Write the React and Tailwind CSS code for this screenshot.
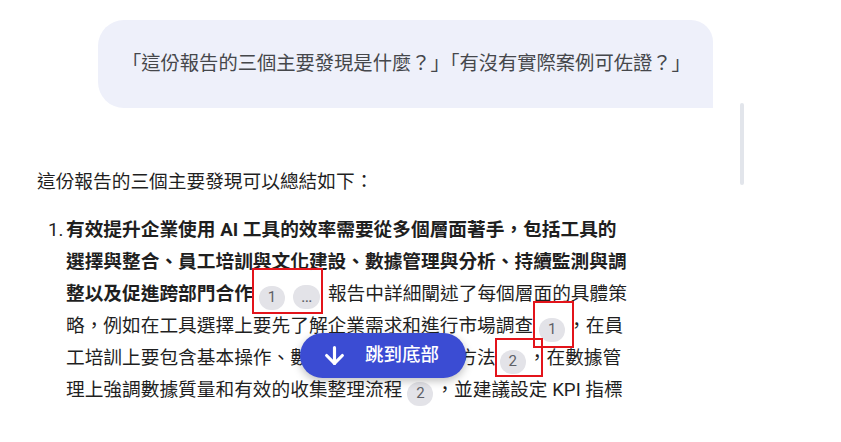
import { ArrowDown } from "lucide-react";

// Chat answer with source chips and a jump-to-bottom pill.

function Chip({ children, className = "" }) {
  return (
    <span
      className={`inline-block h-[24px] min-w-[26px] rounded-full bg-[#e3e3e8] px-[8px] text-center align-[-2px] text-[15px] leading-[23px] text-[#5e6066] ${className}`}
      style={{ fontFamily: "Roboto, sans-serif" }}
    >
      {children}
    </span>
  );
}

export default function App() {
  return (
    <div
      className="relative h-[442px] w-[841px] overflow-hidden bg-white text-[#1f1f1f]"
      style={{ fontFamily: 'Roboto, "Noto Sans CJK TC", sans-serif' }}
    >
      <div className="ml-[98px] mt-[20px] flex h-[88px] w-[615px] items-center rounded-l-[26px] rounded-tr-[22px] bg-[#eef0fa] pl-[24px] text-[19.3px] text-[#45474b]">
        「這份報告的三個主要發現是什麼？」「有沒有實際案例可佐證？」
      </div>

      <div className="absolute left-[740px] top-[103px] h-[82px] w-[4px] rounded-full bg-[#e2e5eb]" />

      <p className="ml-[37px] mt-[58px] text-[18.7px] leading-[32px]">這份報告的三個主要發現可以總結如下：</p>

      <div className="mt-[16px] flex text-[18.7px] leading-[32px]">
        <span className="ml-[48px] w-[18px] shrink-0">1.</span>
        <div className="whitespace-nowrap">
          <span className="font-bold">有效提升企業使用 AI 工具的效率需要從多個層面著手，包括工具的</span>
          <br />
          <span className="font-bold">選擇與整合、員工培訓與文化建設、數據管理與分析、持續監測與調</span>
          <br />
          <span className="font-bold">整以及促進跨部門合作</span>
          <Chip className="ml-[6px]">1</Chip>
          <Chip className="ml-[8px] text-[17px]">…</Chip>
          <span className="ml-[3px]"> 報告中詳細闡述了每個層面的具體策</span>
          <br />
          略，例如在工具選擇上要先了解企業需求和進行市場調查
          <Chip className="ml-[6px] mr-[2px]">1</Chip>，在員
          <br />
          工培訓上要包含基本操作、數據分析與實務應用方法
          <Chip className="ml-[4px] mr-[2px]">2</Chip>，在數據管
          <br />
          理上強調數據質量和有效的收集整理流程
          <Chip className="ml-[5px] mr-[2px]">2</Chip>，並建議設定 KPI 指標
        </div>
      </div>

      <button className="absolute left-[300px] top-[333px] flex h-[45px] w-[166px] items-center gap-[17px] rounded-full bg-[#3b4cd3] pl-[21px] text-[18.5px] font-medium text-white shadow-[0_3px_8px_rgba(0,0,0,0.25)]">
        <ArrowDown size={27} strokeWidth={2.8} />
        跳到底部
      </button>

      <div className="pointer-events-none absolute left-[252px] top-[268px] h-[46px] w-[71px] border-2 border-[#e3141b]" />
      <div className="pointer-events-none absolute left-[533px] top-[301px] h-[47px] w-[41px] border-2 border-[#e3141b]" />
      <div className="pointer-events-none absolute left-[495px] top-[338px] h-[39px] w-[48px] border-2 border-[#e3141b]" />
    </div>
  );
}
